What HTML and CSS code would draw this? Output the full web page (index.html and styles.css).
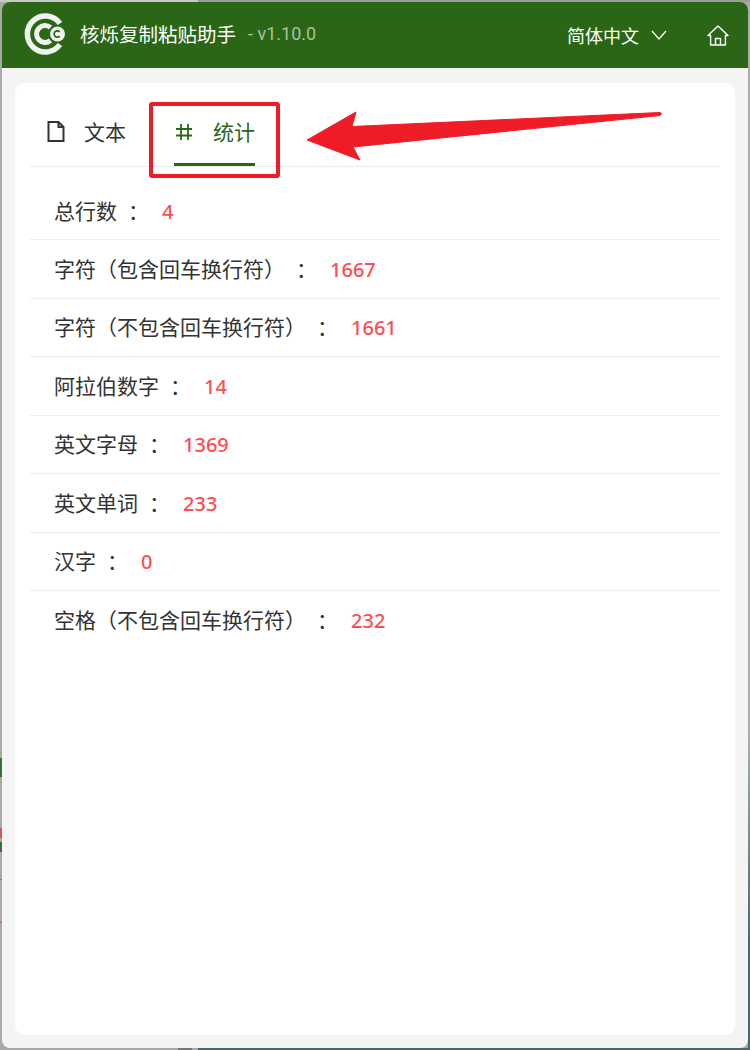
FILE: index.html
```html
<!DOCTYPE html>
<html lang="en">
<head>
  <meta charset="UTF-8">
  <meta name="viewport" content="width=device-width, initial-scale=1.0">
  <title>核烁复制粘贴助手</title>
  <link rel="stylesheet" href="styles.css">
</head>
<body>

<div class="window">
  <header class="topbar">
    <svg class="logo" width="42" height="42" viewBox="0 0 42 42">
      <path d="M36 10.500A18 18 0 1 0 36 31.500" fill="none" stroke="#f1f3ee" stroke-width="5.500"/>
      <path d="M26.500 14.500A8.500 8.500 0 1 0 26.500 27.500" fill="none" stroke="#f1f3ee" stroke-width="5"/>
      <circle cx="33.500" cy="21" r="7.500" fill="#f1f3ee"/>
      <path d="M35.700 18.800A3.200 3.200 0 1 0 35.700 23.200" fill="none" stroke="#2a6616" stroke-width="1.700"/>
    </svg>
    <span class="app-name">核烁复制粘贴助手</span>
    <span class="version">- v1.10.0</span>
    <span class="lang">简体中文</span>
    <svg class="chevron" width="16" height="10" viewBox="0 0 16 10">
      <path d="M1 1l7 8 7-8" fill="none" stroke="#fff" stroke-width="1.300"/>
    </svg>
    <svg class="home" width="22" height="21" viewBox="0 0 22 21">
      <path d="M1 10.500L11 1l10 9.500h-2.600V20H3.600v-9.500z" fill="none" stroke="#fff" stroke-width="1.400" stroke-linejoin="round"/>
      <path d="M8.500 20v-6.500h5V20" fill="none" stroke="#fff" stroke-width="1.400"/>
    </svg>
  </header>

  <main class="content">
    <div class="card">
      <div class="tabs">
        <div class="tab">
          <svg width="18" height="21" viewBox="0 0 18 21">
            <path d="M1.500 1h10l5 5v14h-15z M11.500 1v5h5" fill="none" stroke="#333" stroke-width="2"/>
          </svg>
          <span>文本</span>
        </div>
        <div class="tab active">
          <svg class="hash" width="18" height="18" viewBox="0 0 18 18">
            <path d="M6 1v16M13 1v16M1 6h16M1 12.500h16" fill="none" stroke="#2a6616" stroke-width="1.800"/>
          </svg>
          <span>统计</span>
        </div>
      </div>

      <ul class="stats">
        <li><span>总行数</span><span class="colon">：</span><b>4</b></li>
        <li><span>字符（包含回车换行符）</span><span class="colon">：</span><b>1667</b></li>
        <li><span>字符（不包含回车换行符）</span><span class="colon">：</span><b>1661</b></li>
        <li><span>阿拉伯数字</span><span class="colon">：</span><b>14</b></li>
        <li><span>英文字母</span><span class="colon">：</span><b>1369</b></li>
        <li><span>英文单词</span><span class="colon">：</span><b>233</b></li>
        <li><span>汉字</span><span class="colon">：</span><b>0</b></li>
        <li><span>空格（不包含回车换行符）</span><span class="colon">：</span><b>232</b></li>
      </ul>
    </div>
  </main>
</div>

<!-- annotation drawn on top of the screenshot -->
<div class="mark-box"></div>
<svg class="mark-arrow" width="370" height="60" viewBox="0 0 370 60">
  <path d="M2 33L51 5L47 19.500L355 5.500Q358 6.500 355 8.500L48 40L55 53z" fill="#ef1c27" stroke="#ef1c27" stroke-linejoin="round"/>
</svg>

</body>
</html>
```

FILE: styles.css
```css
* {
  box-sizing: border-box;
  margin: 0;
  padding: 0;
}

html, body {
  height: 100%;
  width: 100%;
  overflow: hidden;
}

body {
  position: relative;
  padding: 2px;
  font-family: "Noto Sans CJK SC", sans-serif;
  background:
    linear-gradient(to bottom, transparent 758px, #3f6b3f 758px, #3f6b3f 777px, transparent 777px, transparent 828px, #d0555f 828px, #d0555f 838px, transparent 838px, transparent 842px, #3f6b3f 842px, #3f6b3f 852px, transparent 852px, transparent 879px, #d0555f 879px, #d0555f 880px, transparent 880px, transparent 922px, #d0555f 922px, #d0555f 923px, transparent 923px) left top / 2px 100% no-repeat,
    linear-gradient(to right, #c9c9c9 198px, #9b9d9d 198px) left top / 100% 2px no-repeat,
    linear-gradient(to right, #a8a8a8 178px, #777 178px, #777 192px, #a8a8a8 192px, #a8a8a8 198px, #4a6868 198px) left bottom / 100% 2px no-repeat,
    linear-gradient(to bottom, #a9adad 70%, #4a6868 90%) right top / 2px 100% no-repeat,
    #a9a9a9;
}

.window {
  height: 100%;
  display: flex;
  flex-direction: column;
  border-radius: 8px;
  overflow: hidden;
  background: #f4f4f4;
}

.topbar {
  flex: none;
  height: 66px;
  display: flex;
  align-items: center;
  padding: 0 19px 0 22px;
  background: #2a6616;
  color: #fff;
}

.logo {
  flex: none;
  margin-right: 14px;
  margin-bottom: 3px;
}

.app-name {
  margin-bottom: 3px;
  font-size: 19.500px;
}

.version {
  margin-left: 12px;
  margin-bottom: 3px;
  font-family: Roboto, sans-serif;
  font-size: 18px;
  color: #a9c0a3;
}

.lang {
  margin-left: auto;
  margin-bottom: 1px;
  font-size: 18px;
}

.chevron {
  margin-left: 12px;
}

.home {
  margin-left: 40px;
}

.content {
  flex: 1;
  padding: 15px 13px 13px;
}

.card {
  height: 100%;
  padding: 0 15px;
  background: #fff;
  border-radius: 10px;
}

.tabs {
  height: 84px;
  display: flex;
  padding-top: 14px;
  border-bottom: 1px solid #ececec;
}

.tab {
  height: 69px;
  display: flex;
  align-items: center;
  gap: 19px;
  padding: 0 2px 0 17px;
  font-size: 21px;
  color: #333;
}

.tab span {
  margin-bottom: 2px;
}

.tab.active {
  margin-left: 46px;
  padding: 0;
  color: #2a6616;
  border-bottom: 3px solid #2a6616;
  gap: 20px;
}

.tab.active span {
  margin-top: 2px;
  margin-bottom: 0;
}

.hash {
  margin-left: 1px;
  margin-top: 3px;
}

.stats {
  list-style: none;
  margin-top: 15px;
}

.stats li {
  height: 58.500px;
  display: flex;
  align-items: center;
  padding-left: 24px;
  font-size: 21px;
  color: #333;
  border-bottom: 1px solid #eee;
}

.stats li:first-child {
  height: 58px;
}

.stats li:last-child {
  border-bottom: none;
}

.stats li span {
  margin-bottom: 2px;
}

.stats li .colon {
  margin-left: 11px;
}

.stats b {
  margin-left: 13px;
  margin-top: 1px;
  font-family: "Noto Sans", sans-serif;
  font-size: 20px;
  font-weight: 500;
  color: #ff4d55;
}

.mark-box {
  position: absolute;
  left: 149px;
  top: 102px;
  width: 131px;
  height: 76px;
  border: 4px solid #ef1c27;
  border-radius: 3px;
}

.mark-arrow {
  position: absolute;
  left: 305px;
  top: 107px;
}
```
